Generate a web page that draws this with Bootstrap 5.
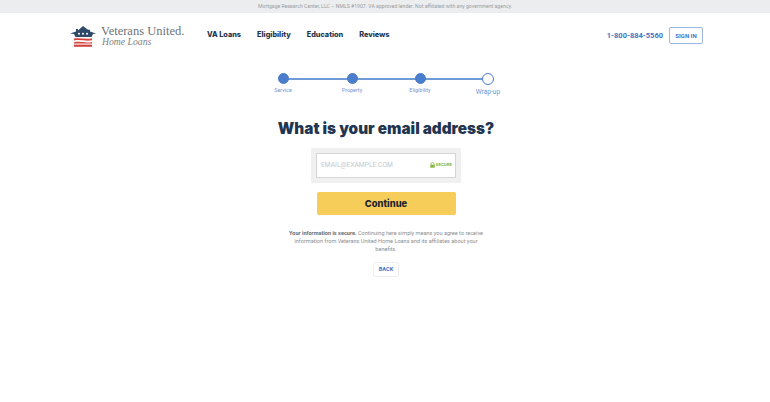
<!DOCTYPE html>
<html lang="en">
<head>
  <meta charset="UTF-8" />
  <title>Veterans United Home Loans</title>
  <link href="https://cdn.jsdelivr.net/npm/bootstrap@5.3.3/dist/css/bootstrap.min.css" rel="stylesheet">
  <style>
    body { font-family: Roboto, "Liberation Sans", sans-serif; background: #fff; }
    .top-note { height: 13px; background: #ecedef; color: #9a9da1; font-size: 5.15px; line-height: 12px; text-align: center; }
    .site-head { height: 45px; padding: 0 67px 0 70px; }
    .brand-box { width: 114px; }
    .brand-main { font-family: "Liberation Serif", serif; font-size: 12.5px; line-height: 14px; color: #6d7378; }
    .brand-sub { font-family: "Liberation Serif", serif; font-style: italic; font-size: 9.7px; line-height: 11px; margin-top: -2px; color: #7d8286; padding-left: 1px; }
    .main-links { margin-left: 23px; gap: 16px; }
    .main-links a { font-family: Inter, sans-serif; font-weight: 800; font-size: 7.3px; color: #1f3550; text-decoration: none; }
    .phone-link { font-weight: 700; font-size: 7.5px; color: #3f74c4; text-decoration: none; }
    .signin-btn { width: 34px; height: 17px; padding: 0; margin-left: 6px; border: 1px solid #9db8e2; border-radius: 2px; font-size: 6px; font-weight: 700; line-height: 15px; color: #3f74c4; background: #fff; }
    .page-body { padding-left: 2px; }
    .stepper { width: 240px; height: 36px; margin: 12px auto 0; position: relative; }
    .step-line { position: absolute; left: 17px; width: 205px; top: 8px; height: 2px; background: #6f9bd8; }
    .step-item { position: absolute; top: 3px; width: 60px; text-align: center; color: #6f95d0; font-size: 5.4px; }
    .step-dot { display: block; width: 11px; height: 11px; border-radius: 50%; background: #4a7dcb; border: 1.5px solid #4a7dcb; margin: 0 auto 2px; position: relative; }
    .step-dot.is-open { width: 12px; height: 12px; margin-top: -.5px; background: #fff; margin-bottom: 3px; }
    .step-item.is-open { font-size: 6.6px; }
    .page-title { font-family: Inter, sans-serif; font-weight: 900; font-size: 15.3px; line-height: 20px; color: #1f3550; margin: 13px 0 0; text-align: center; }
    .email-wrap { width: 150px; height: 35px; margin: 9px auto 0; padding: 5px 5px 5px 5px; background: #f0f0f0; }
    .email-field { height: 25px; background: #fff; border: 1px solid #d5d5d5; padding: 0 3px 0 4px; }
    .email-field span:first-child { font-size: 6.7px; color: #c6c7c9; }
    .secure-tag { font-size: 4.4px; font-weight: 700; color: #86b83f; gap: 1px; }
    .go-btn { display: block; width: 139px; height: 23px; margin: 9px auto 0; padding: 1px 0 0; border: 0; border-radius: 2px; background: #f6cd59; font-family: Inter, sans-serif; font-weight: 800; font-size: 9.4px; color: #1d2530; }
    .legal-text { width: 200px; margin: 14px auto 0; font-size: 5.55px; line-height: 8px; color: #8b8e92; text-align: center; }
    .legal-text strong { color: #6a6e72; }
    .back-btn { display: block; width: 26px; height: 15px; margin: 9px auto 0; padding: 0; border: 1px solid #eeeeee; border-radius: 2px; background: #fff; color: #3f74c4; font-size: 5.6px; font-weight: 700; }
  </style>
</head>
<body>
  <div class="top-note">Mortgage Research Center, LLC – NMLS #1907. VA approved lender. Not affiliated with any government agency.</div>

  <header class="site-head d-flex align-items-center">
    <div class="brand-box d-flex align-items-center flex-shrink-0">
      <svg width="27" height="22" viewBox="0 0 27 22" class="flex-shrink-0">
        <!-- roof with dormer, stars, striped base -->
        <path d="M0 8.6 6 6.4V4h2v1.6L13 1l5 3.8h2v1.6l6 2.2-3 .4-1.5 3H5.5L4 9z" fill="#2f4a68"/>
        <circle cx="9" cy="8.8" r="1" fill="#fff"/><circle cx="13" cy="8.8" r="1" fill="#fff"/><circle cx="17" cy="8.8" r="1" fill="#fff"/>
        <path d="M4 13.6c6-1.4 12 1.2 18-.3v2c-6 1.4-12-1.2-18 .3z" fill="#d2453f"/>
        <path d="M4 17.2c6-1.4 12 1.2 18-.3v1.5H4z" fill="#d2453f"/>
        <rect x="4" y="19.6" width="18" height="2.2" fill="#d2453f"/>
      </svg>
      <div class="ms-1">
        <div class="brand-main text-nowrap">Veterans United.</div>
        <div class="brand-sub text-nowrap">Home Loans</div>
      </div>
    </div>
    <nav class="main-links d-flex">
      <a href="#">VA Loans</a>
      <a href="#">Eligibility</a>
      <a href="#">Education</a>
      <a href="#">Reviews</a>
    </nav>
    <div class="ms-auto d-flex align-items-center">
      <a class="phone-link" href="#">1-800-884-5560</a>
      <button class="signin-btn" type="button">SIGN IN</button>
    </div>
  </header>

  <main class="page-body">
    <div class="stepper">
      <div class="step-line"></div>
      <div class="step-item" style="left:-13px"><span class="step-dot"></span>Service</div>
      <div class="step-item" style="left:56px"><span class="step-dot"></span>Property</div>
      <div class="step-item" style="left:124px"><span class="step-dot"></span>Eligibility</div>
      <div class="step-item is-open" style="left:192px"><span class="step-dot is-open"></span>Wrap-up</div>
    </div>

    <h1 class="page-title">What is your email address?</h1>

    <div class="email-wrap">
      <div class="email-field d-flex align-items-center justify-content-between">
        <span>EMAIL@EXAMPLE.COM</span>
        <span class="secure-tag d-flex align-items-center">
          <svg width="5" height="6" viewBox="0 0 5 6"><path d="M1 3V2a1.5 1.5 0 0 1 3 0v1" fill="none" stroke="#86b83f" stroke-width=".8"/><rect x=".3" y="2.7" width="4.4" height="3" fill="#86b83f"/></svg>
          SECURE
        </span>
      </div>
    </div>

    <button class="go-btn" type="button">Continue</button>

    <p class="legal-text"><strong>Your information is secure.</strong> Continuing here simply means you agree to receive information from Veterans United Home Loans and its affiliates about your benefits.</p>

    <button class="back-btn" type="button">BACK</button>
  </main>

  <script src="https://cdn.jsdelivr.net/npm/bootstrap@5.3.3/dist/js/bootstrap.bundle.min.js"></script>
</body>
</html>
